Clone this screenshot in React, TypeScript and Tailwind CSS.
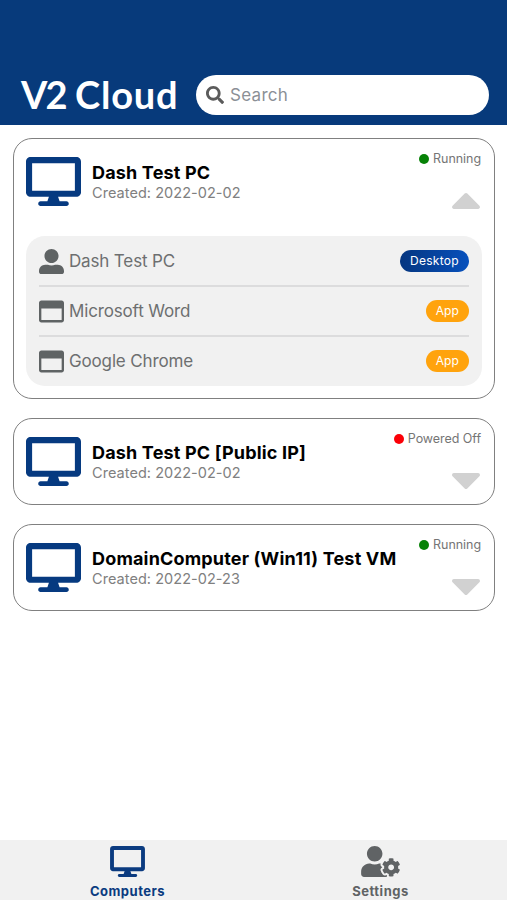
import { FaDesktop, FaRegWindowMaximize, FaSearch, FaUserAlt, FaUserCog } from "react-icons/fa";

type Connection = { name: string; type: "Desktop" | "App" };

type Computer = {
  name: string;
  created: string;
  status: "Running" | "Powered Off";
  connections?: Connection[];
};

const computers: Computer[] = [
  {
    name: "Dash Test PC",
    created: "2022-02-02",
    status: "Running",
    connections: [
      { name: "Dash Test PC", type: "Desktop" },
      { name: "Microsoft Word", type: "App" },
      { name: "Google Chrome", type: "App" },
    ],
  },
  { name: "Dash Test PC [Public IP]", created: "2022-02-02", status: "Powered Off" },
  { name: "DomainComputer (Win11) Test VM", created: "2022-02-23", status: "Running" },
];

function Header() {
  return (
    <header className="flex h-[125px] shrink-0 items-end bg-[#073a7b] pb-[10px] pl-[21px] pr-[18px]">
      <h1 className="mb-px flex w-[175px] shrink-0 gap-[9px] whitespace-nowrap font-['Lato',sans-serif] text-[38px] font-bold leading-[40px] text-white">
        <span className="w-[45px] tracking-[-2px]">V2</span>
        <span className="tracking-[0.8px]">Cloud</span>
      </h1>
      <div className="flex h-[40px] flex-1 items-center rounded-full bg-white pl-[10px]">
        <FaSearch className="size-[18px] shrink-0 text-[#5b5b5b]" />
        <input
          className="ml-[6px] mt-[2px] w-full bg-transparent text-[17px] tracking-[0.3px] outline-none placeholder:text-[#8b9096]"
          placeholder="Search"
        />
      </div>
    </header>
  );
}

// Cropped caret, points down unless the card is expanded
function Caret({ open }: { open: boolean }) {
  return (
    <svg
      viewBox="11 192 298 169"
      preserveAspectRatio="none"
      fill="currentColor"
      className={open ? "h-[16px] w-[28px] rotate-180" : "h-[16px] w-[28px]"}
    >
      <path d="M31.3 192h257.3c17.8 0 26.7 21.5 14.1 34.1L174.1 354.8c-7.8 7.8-20.5 7.8-28.3 0L17.2 226.1C4.6 213.5 13.5 192 31.3 192z" />
    </svg>
  );
}

function ConnectionRow({ name, type }: Connection) {
  const isDesktop = type === "Desktop";
  return (
    <li className="flex h-[50px] items-center border-b-2 border-[#dcdcdd] last:border-transparent">
      {isDesktop ? (
        <FaUserAlt className="size-[25px] text-[#5f6364]" />
      ) : (
        <FaRegWindowMaximize className="size-[25px] text-[#5f6364]" />
      )}
      <span className="ml-[5px] mt-px flex-1 text-[17px] tracking-[-0.15px] text-[#6d6f70]">{name}</span>
      <span
        className={
          isDesktop
            ? "flex h-[22px] items-center rounded-full bg-linear-to-r from-[#053680] to-[#0751bd] px-[10px] text-[12px] tracking-[0.3px] text-white"
            : "flex h-[22px] items-center rounded-full bg-[#ffa30d] px-[10px] text-[12px] tracking-[0.1px] text-white"
        }
      >
        {type}
      </span>
    </li>
  );
}

function ComputerCard({ name, created, status, connections }: Computer) {
  return (
    <section className="rounded-[19px] border border-[#808080] bg-white px-[12px]">
      <div className="flex h-[85px] items-center">
        <FaDesktop className="h-[49px] w-[55px] shrink-0 text-[#063a80]" />
        <div className="ml-[11px] flex-1 whitespace-nowrap">
          <h2 className="mt-px text-[18px] font-bold leading-[21px] tracking-[0.17px] text-black">{name}</h2>
          <p className="text-[14.5px] leading-[19px] tracking-[0.05px] text-[#808080]">Created: {created}</p>
        </div>
        <div className="flex h-full flex-col items-end pr-px pt-[12px]">
          <div className="flex items-center gap-[4px] whitespace-nowrap text-[12.5px] leading-[16px] tracking-[-0.05px] text-[#757575]">
            <span
              className={
                status === "Running"
                  ? "size-[10px] rounded-full bg-[#078207]"
                  : "size-[10px] rounded-full bg-[#fb0007]"
              }
            />
            {status}
          </div>
          <div className="mr-px mt-[26px] text-[#d1d1d1]">
            <Caret open={!!connections} />
          </div>
        </div>
      </div>
      {connections && (
        <ul className="mb-[12px] mt-[12px] h-[150px] rounded-[19px] bg-[#f1f1f1] px-[13px] pt-px">
          {connections.map((c) => (
            <ConnectionRow key={c.name} {...c} />
          ))}
        </ul>
      )}
    </section>
  );
}

function TabBar() {
  return (
    <nav className="grid h-[60px] shrink-0 grid-cols-2 bg-[#f1f1f1] pl-px text-[13px] font-bold tracking-[0.5px]">
      <button className="flex flex-col items-center pt-[6px] text-[#0b3b80]">
        <FaDesktop className="h-[31px] w-[35px]" />
        <span className="mt-[5px] leading-[18px]">Computers</span>
      </button>
      <button className="flex flex-col items-center pt-[6px] text-[#606365]">
        <FaUserCog className="h-[31px] w-[39px]" />
        <span className="mt-[5px] leading-[18px]">Settings</span>
      </button>
    </nav>
  );
}

export default function App() {
  return (
    <div className="flex h-screen flex-col bg-white font-['Inter','Liberation_Sans',sans-serif]">
      <Header />
      <main className="flex flex-1 flex-col gap-[19px] pl-[13px] pr-[12px] pt-[13px]">
        {computers.map((computer) => (
          <ComputerCard key={computer.name} {...computer} />
        ))}
      </main>
      <TabBar />
    </div>
  );
}
